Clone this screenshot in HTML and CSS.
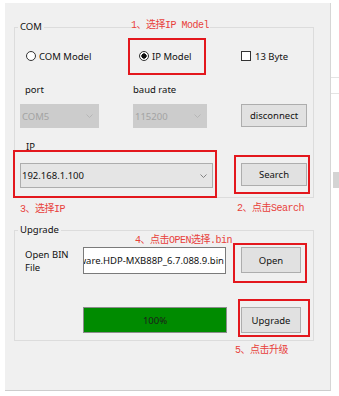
FILE: index.html
```html
<!DOCTYPE html>
<html lang="en">
<head>
    <meta charset="UTF-8">
    <title>Network Upgrade Tool</title>
    <link rel="stylesheet" href="styles.css">
</head>
<body>
    <div class="screen">
        <div class="window">
            <!-- Connection settings -->
            <fieldset class="group group-com">
                <legend>COM</legend>
                <div class="row row-mode">
                    <label class="opt"><span class="radio"></span>COM Model</label>
                    <label class="opt"><span class="radio checked"></span>IP Model</label>
                    <label class="opt opt-check"><span class="check"></span>13 Byte</label>
                </div>
                <div class="row row-labels">
                    <span class="cap cap-port">port</span>
                    <span class="cap">baud rate</span>
                </div>
                <div class="row row-serial">
                    <div class="combo combo-off combo-port">COM5<svg class="chev" width="7" height="4" viewBox="0 0 7 4"><polyline points="0.5,0.5 3.5,3.5 6.5,0.5"/></svg></div>
                    <div class="combo combo-off combo-baud">115200<svg class="chev" width="7" height="4" viewBox="0 0 7 4"><polyline points="0.5,0.5 3.5,3.5 6.5,0.5"/></svg></div>
                    <button class="btn btn-wide">disconnect</button>
                </div>
                <div class="cap cap-ip">IP</div>
                <div class="row row-ip">
                    <div class="combo combo-ip">192.168.1.100<svg class="chev" width="7" height="4" viewBox="0 0 7 4"><polyline points="0.5,0.5 3.5,3.5 6.5,0.5"/></svg></div>
                    <button class="btn btn-wide btn-search">Search</button>
                </div>
            </fieldset>

            <!-- Firmware upgrade -->
            <fieldset class="group group-upg">
                <legend>Upgrade</legend>
                <div class="row2 row-open">
                    <span class="cap cap-file">Open BIN<br>File</span>
                    <div class="path">ware.HDP-MXB88P_6.7.088.9.bin</div>
                    <button class="btn btn-narrow">Open</button>
                </div>
                <div class="row2 row-progress">
                    <div class="progress"><div class="bar" style="width: 100%"></div><span class="pct">100%</span></div>
                    <button class="btn btn-narrow">Upgrade</button>
                </div>
            </fieldset>
        </div>

        <div class="side">
            <div class="side-line side-line1"></div>
            <div class="side-line side-line2"></div>
            <div class="side-block"></div>
        </div>

        <!-- Annotations -->
        <div class="mark mark-ipmodel"></div>
        <div class="mark mark-ip"></div>
        <div class="mark mark-search"></div>
        <div class="mark mark-open"></div>
        <div class="mark mark-upgrade"></div>

        <span class="note note-1">1、选择IP Model</span>
        <span class="note note-2">2、点击Search</span>
        <span class="note note-3">3、选择IP</span>
        <span class="note note-4">4、点击OPEN选择.bin</span>
        <span class="note note-5">5、点击升级</span>
    </div>
</body>
</html>
```

FILE: styles.css
```css
/* General */
body {
    margin: 0;
    background: #fff;
    font-family: "Noto Sans", sans-serif;
    font-size: 9.5px;
    color: #111;
}

.screen {
    position: relative;
    display: flex;
    width: 339px;
    height: 396px;
    padding: 3px 0 0 5px;
    box-sizing: border-box;
    overflow: hidden;
}

.window {
    width: 326px;
    height: 388px;
    box-sizing: border-box;
    padding-left: 9px;
    background: #f0f0f0;
    border-right: 1px solid #d6d6d6;
    border-bottom: 1px solid #cdcdcd;
}

/* Group boxes */
.group {
    width: 300px;
    box-sizing: border-box;
    min-width: 0;
    margin: 0;
    padding: 0;
    border: 1px solid #dcdcdc;
}

.group legend {
    margin-left: 3px;
    padding: 0 2px;
    line-height: 14px;
}

.group-com {
    margin-top: 17px;
    padding-bottom: 9px;
}

.group-upg {
    margin-top: 25px;
    padding-bottom: 7px;
}

.row {
    display: grid;
    grid-template-columns: 113px 108px 66px;
    padding-left: 5px;
}

.row2 {
    display: grid;
    grid-template-columns: 63px 158px 60px;
    padding-left: 5px;
}

.row-mode {
    margin-top: 12px;
    height: 20px;
}

.row-labels {
    margin-top: 17px;
    height: 14px;
    line-height: 14px;
}

.row-serial {
    margin-top: 7px;
    height: 24px;
}

.row-ip {
    margin-top: 9px;
    height: 25px;
}

.row-open {
    margin-top: 10px;
    height: 26px;
}

.row-progress {
    margin-top: 34px;
    height: 26px;
}

/* Radio and check boxes */
.opt {
    display: flex;
    align-items: center;
    gap: 3px;
    padding-left: 6px;
}

.opt-check {
    padding-left: 0;
    gap: 4px;
}

.radio {
    width: 10px;
    height: 10px;
    box-sizing: border-box;
    border: 1px solid #333;
    border-radius: 50%;
    background: #fff;
}

.radio.checked {
    background: radial-gradient(circle, #111 0 2.4px, #fff 2.9px);
}

.check {
    width: 10px;
    height: 10px;
    box-sizing: border-box;
    border: 1px solid #333;
    background: #fff;
}

/* Captions */
.cap-port {
    padding-left: 5px;
}

.cap-ip {
    margin-top: 12px;
    padding-left: 11px;
    line-height: 14px;
}

.cap-file {
    padding: 1px 0 0 5px;
    line-height: 13px;
}

/* Combo boxes */
.combo {
    display: flex;
    align-items: center;
    justify-content: space-between;
    box-sizing: border-box;
    padding: 0 5px 0 1px;
}

.combo .chev {
    fill: none;
    stroke-width: 0.9;
}

.combo-off {
    background: #cccccc;
    border: 1px solid #cccccc;
    color: #a3a3a3;
}

.combo-off .chev {
    stroke: #b3b3b3;
}

.combo-port {
    width: 79px;
}

.combo-baud {
    width: 74px;
}

.combo-ip {
    grid-column: 1 / 3;
    width: 193px;
    background: #e5e5e5;
    border: 1px solid #adadad;
    color: #111;
}

.combo-ip .chev {
    stroke: #777;
}

/* Buttons */
.btn {
    margin: 0;
    padding: 0;
    box-sizing: border-box;
    background: #e1e1e1;
    border: 1px solid #adadad;
    font-family: inherit;
    font-size: 9.5px;
    color: #111;
}

.btn-wide {
    width: 66px;
    height: 23px;
    grid-column: 3;
}

.btn-narrow {
    width: 60px;
    height: 26px;
    grid-column: 3;
}

/* File path and progress */
.path {
    display: flex;
    justify-content: flex-end;
    align-items: center;
    width: 143px;
    box-sizing: border-box;
    padding-right: 1px;
    overflow: hidden;
    white-space: nowrap;
    background: #fff;
    border: 1px solid #7a7a7a;
    color: #111;
}

.progress {
    grid-column: 2;
    display: grid;
    width: 144px;
    box-sizing: border-box;
    border: 1px solid #8c8c8c;
    background: #e6e6e6;
}

.progress .bar,
.progress .pct {
    grid-area: 1 / 1;
}

.progress .bar {
    background: #008b00;
}

.progress .pct {
    align-self: center;
    justify-self: center;
    color: #1c1c1c;
}

/* Window behind */
.side {
    display: flex;
    flex-direction: column;
    width: 8px;
}

.side-line {
    height: 1px;
    background: #e4e4e4;
}

.side-line1 {
    margin-top: 74px;
}

.side-line2 {
    margin-top: 15px;
}

.side-block {
    margin: 78px 0 0 2px;
    height: 16px;
    background: #d4d4d4;
}

/* Red annotation marks */
.mark {
    position: absolute;
    box-sizing: border-box;
    border: 2px solid #e3171d;
}

.mark-ipmodel {
    left: 128px;
    top: 38px;
    width: 78px;
    height: 37px;
}

.mark-ip {
    left: 13px;
    top: 150px;
    width: 204px;
    height: 48px;
}

.mark-search {
    left: 234px;
    top: 155px;
    width: 76px;
    height: 39px;
}

.mark-open {
    left: 233px;
    top: 243px;
    width: 74px;
    height: 40px;
}

.mark-upgrade {
    left: 238px;
    top: 299px;
    width: 72px;
    height: 38px;
}

.note {
    position: absolute;
    font-family: "Liberation Mono", "Noto Sans CJK SC", monospace;
    font-size: 10px;
    letter-spacing: -0.5px;
    line-height: 12px;
    color: #e8413b;
    white-space: nowrap;
}

.note-1 {
    left: 131px;
    top: 20px;
    padding-right: 1px;
    background: #f0f0f0;
}

.note-2 {
    left: 237px;
    top: 203px;
}

.note-3 {
    left: 20px;
    top: 204px;
}

.note-4 {
    left: 135px;
    top: 235px;
}

.note-5 {
    left: 235px;
    top: 345px;
}
```
